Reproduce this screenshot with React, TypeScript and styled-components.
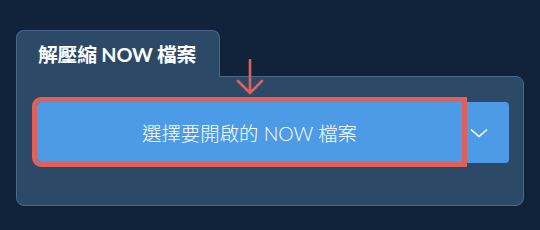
import React from 'react';
import styled, { createGlobalStyle } from 'styled-components';

const GlobalStyle = createGlobalStyle`
  html, body {
    margin: 0;
    padding: 0;
    background-color: #11233a;
  }
  body {
    font-family: Lato, 'Noto Sans CJK TC', sans-serif;
  }
`;

const Page = styled.div`
  width: 540px;
  height: 230px;
  box-sizing: border-box;
  padding: 30px 0 0 16px;
`;

const Card = styled.div`
  display: flex;
  flex-direction: column;
  align-items: flex-start;
  width: 508px;
`;

const Tab = styled.div`
  position: relative;
  z-index: 1;
  box-sizing: border-box;
  width: 204px;
  height: 47px;
  margin-bottom: -1px;
  padding: 0 0 1px 21px;
  display: flex;
  align-items: center;
  background-color: #2c4968;
  border: 1px solid #4a6688;
  border-bottom: none;
  border-radius: 8px 8px 0 0;
  color: #ffffff;
  font-size: 19.8px;
  font-weight: 700;
  letter-spacing: -0.2px;
`;

const Panel = styled.div`
  position: relative;
  box-sizing: border-box;
  width: 508px;
  height: 130px;
  padding: 25px 14px 0 20px;
  background-color: #2c4968;
  border: 1px solid #4a6688;
  border-radius: 0 8px 8px 8px;
`;

const ButtonRow = styled.div`
  display: flex;
  align-items: flex-start;
  gap: 5px;
`;

const MainButton = styled.button`
  flex: 1;
  height: 60px;
  padding: 0;
  border: none;
  border-radius: 4px 0 0 4px;
  outline: 5px solid #e0605c;
  background-color: #4d9be6;
  color: #ffffff;
  font-family: Lato, 'Noto Sans CJK TC', sans-serif;
  font-size: 19.4px;
  font-weight: 300;
  cursor: pointer;
`;

const DropButton = styled.button`
  width: 42px;
  height: 61px;
  padding: 0 0 0 3px;
  display: flex;
  align-items: center;
  justify-content: flex-start;
  border: none;
  border-radius: 0 4px 4px 0;
  background-color: #4d9be6;
  cursor: pointer;
`;

const Pointer = styled.svg`
  position: absolute;
  left: 219px;
  top: -18px;
`;

const App: React.FC = () => {
  return (
    <Page>
      <GlobalStyle />
      <Card>
        <Tab>解壓縮 NOW 檔案</Tab>
        <Panel>
          <Pointer width="28" height="37" viewBox="0 0 28 37">
            <path
              d="M14 1 V34 M2 22 L14 34 L26 22"
              fill="none"
              stroke="#e0605c"
              strokeWidth="2.6"
              strokeLinecap="round"
              strokeLinejoin="round"
            />
          </Pointer>
          <ButtonRow>
            <MainButton>選擇要開啟的 NOW 檔案</MainButton>
            <DropButton>
              <svg width="18" height="10" viewBox="0 0 18 10">
                <polyline
                  points="1,1.5 9,8.5 17,1.5"
                  fill="none"
                  stroke="#ffffff"
                  strokeWidth="1.6"
                />
              </svg>
            </DropButton>
          </ButtonRow>
        </Panel>
      </Card>
    </Page>
  );
};

export default App;
